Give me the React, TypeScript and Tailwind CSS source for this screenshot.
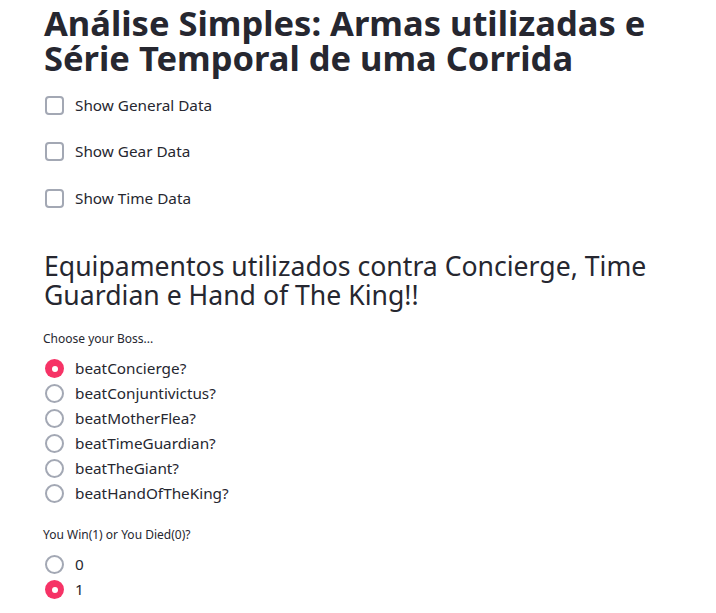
import { useState } from 'react'

const bosses = [
  'beatConcierge?',
  'beatConjuntivictus?',
  'beatMotherFlea?',
  'beatTimeGuardian?',
  'beatTheGiant?',
  'beatHandOfTheKing?',
]

function Checkbox({ label }: { label: string }) {
  const [checked, setChecked] = useState(false)
  return (
    <label className="flex items-center gap-[11px] cursor-pointer h-[24px]" onClick={() => setChecked(!checked)}>
      <span
        className={`w-[19px] h-[19px] rounded-[4px] border-2 ${checked ? 'bg-[#f63366] border-[#f63366]' : 'border-[#a3a8b4] bg-white'}`}
      />
      <span className="text-[15.3px] text-[#262730]">{label}</span>
    </label>
  )
}

function Radio({ label, selected, onSelect }: { label: string; selected: boolean; onSelect: () => void }) {
  return (
    <label className="flex items-center gap-[11px] cursor-pointer h-[25px]" onClick={onSelect}>
      {selected ? (
        <span className="w-[19px] h-[19px] rounded-full bg-[#f63366] flex items-center justify-center">
          <span className="w-[6px] h-[6px] rounded-full bg-white" />
        </span>
      ) : (
        <span className="w-[19px] h-[19px] rounded-full border-2 border-[#a3a8b4] bg-white" />
      )}
      <span className="text-[15.3px] text-[#262730]">{label}</span>
    </label>
  )
}

export default function App() {
  const [boss, setBoss] = useState(0)
  const [win, setWin] = useState(1)

  return (
    <div className="min-h-screen bg-white pl-[44px] pr-[30px] pt-[5px] [font-family:'Noto_Sans',sans-serif] text-[#262730]">
      <h1 className="text-[34.5px] font-bold leading-[35px]">
        Análise Simples: Armas utilizadas e Série Temporal de uma Corrida
      </h1>

      {/* Checkboxes */}
      <div className="mt-[18px] flex flex-col gap-[22.5px] pl-[1px]">
        <Checkbox label="Show General Data" />
        <Checkbox label="Show Gear Data" />
        <Checkbox label="Show Time Data" />
      </div>

      <h2 className="mt-[42px] text-[26.6px] leading-[29px] font-normal">
        Equipamentos utilizados contra Concierge, Time Guardian e Hand of The King!!
      </h2>

      <div className="mt-[20px] -ml-[1px] text-[12px]">Choose your Boss...</div>
      <div className="mt-[8px] flex flex-col pl-[1px]">
        {bosses.map((b, i) => (
          <Radio key={b} label={b} selected={boss === i} onSelect={() => setBoss(i)} />
        ))}
      </div>

      <div className="mt-[20px] -ml-[1px] text-[12px]">You Win(1) or You Died(0)?</div>
      <div className="mt-[8px] flex flex-col pl-[1px]">
        {['0', '1'].map((v, i) => (
          <Radio key={v} label={v} selected={win === i} onSelect={() => setWin(i)} />
        ))}
      </div>
    </div>
  )
}
